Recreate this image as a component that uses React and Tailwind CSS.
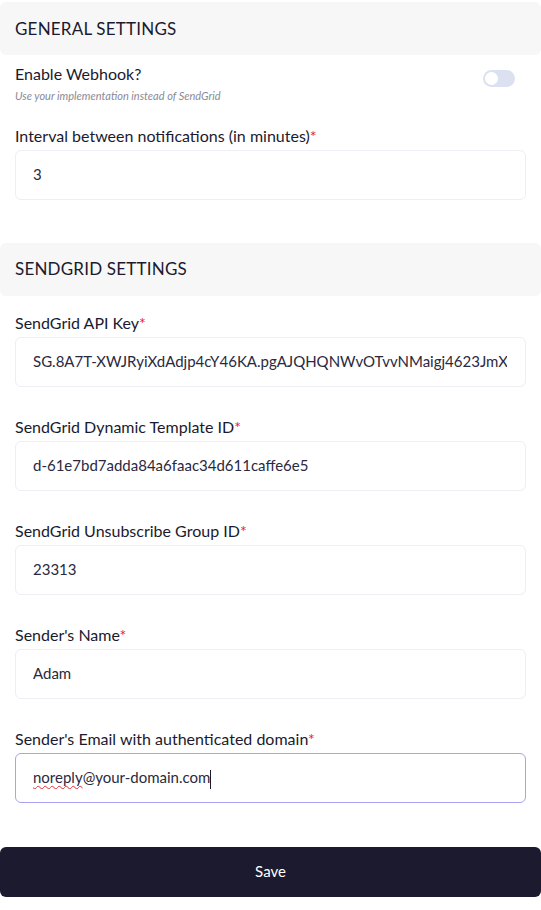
import React from "react";

function Field({ label, value, focused }) {
  return (
    <div className="flex flex-col">
      <label className="text-[16px] leading-[20px] text-[#1b1a2e]">
        {label}
        <span className="text-[#e8174b]">*</span>
      </label>
      <div
        className={
          "mt-[4px] h-[50px] flex items-center rounded-[6px] border bg-white pl-[17px] pr-[18px] " +
          (focused ? "border-[#a7a3f2]" : "border-[#eeeef4]")
        }
      >
        <span className="flex-1 min-w-0 text-[15px] text-[#2a2940] whitespace-nowrap overflow-hidden">
          {focused ? (
            <>
              <span className="underline decoration-wavy decoration-[#e0303a] decoration-[1px] underline-offset-[2px]">noreply</span>
              @your-domain.com
              <span className="inline-block w-px h-[19px] bg-[#1b1a2e] align-middle"></span>
            </>
          ) : (
            value
          )}
        </span>
      </div>
    </div>
  );
}

function Header({ children }) {
  return (
    <div className="h-[53px] rounded-[6px] bg-[#f7f7f7] flex items-center px-[15px]">
      <span className="text-[17px] text-[#1b1a2e] tracking-[0.2px]">{children}</span>
    </div>
  );
}

export default function App() {
  return (
    <div
      className="w-[541px] h-[910px] bg-white pt-[2px]"
      style={{ fontFamily: "Lato, 'Open Sans', sans-serif" }}
    >
      <Header>GENERAL SETTINGS</Header>
      <div className="px-[15px]">
        <div className="flex items-start justify-between pt-[9px]">
          <div className="flex flex-col">
            <span className="text-[16px] leading-[20px] text-[#1b1a2e]">Enable Webhook?</span>
            <span className="mt-[4px] text-[11px] italic text-[#8a8a96]">
              Use your implementation instead of SendGrid
            </span>
          </div>
          <div className="mr-[11px] mt-[6px] w-[32px] h-[17px] rounded-full bg-[#dbe1f1] relative">
            <div className="absolute left-[2px] top-[2px] w-[13px] h-[13px] rounded-full bg-white"></div>
          </div>
        </div>
        <div className="mt-[21px]">
          <Field label="Interval between notifications (in minutes)" value="3" />
        </div>
      </div>
      <div className="mt-[43px]">
        <Header>SENDGRID SETTINGS</Header>
      </div>
      <div className="px-[15px] pt-[17px] flex flex-col gap-[30px]">
        <Field label="SendGrid API Key" value="SG.8A7T-XWJRyiXdAdjp4cY46KA.pgAJQHQNWvOTvvNMaigj4623JmXqZ" />
        <Field label="SendGrid Dynamic Template ID" value="d-61e7bd7adda84a6faac34d611caffe6e5" />
        <Field label="SendGrid Unsubscribe Group ID" value="23313" />
        <Field label="Sender's Name" value="Adam" />
        <Field label="Sender's Email with authenticated domain" focused />
      </div>
      <button className="mt-[44px] w-full h-[50px] rounded-[6px] bg-[#1b1a2e] text-white text-[15px]">
        Save
      </button>
    </div>
  );
}
